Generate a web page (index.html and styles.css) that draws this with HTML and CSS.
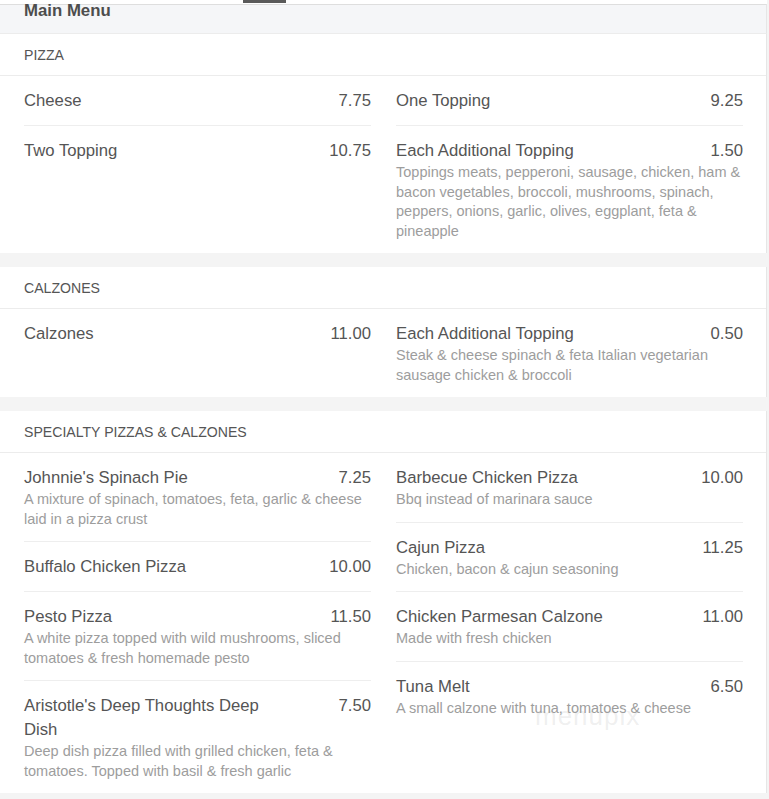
FILE: index.html
```html
<!DOCTYPE html>
<html>
<head>
<meta charset="utf-8">
<link rel="stylesheet" href="styles.css">
</head>
<body>
<div class="tabs"><span class="tab-active"></span></div>
<div class="header">Main Menu</div>

<section class="card">
  <h2 class="section-title">Pizza</h2>
  <div class="cols">
    <div class="col">
      <div class="item"><div class="row"><span class="name">Cheese</span><span class="price">7.75</span></div></div>
      <div class="item"><div class="row"><span class="name">Two Topping</span><span class="price">10.75</span></div></div>
    </div>
    <div class="col">
      <div class="item"><div class="row"><span class="name">One Topping</span><span class="price">9.25</span></div></div>
      <div class="item"><div class="row"><span class="name">Each Additional Topping</span><span class="price">1.50</span></div>
        <p class="desc">Toppings meats, pepperoni, sausage, chicken, ham &amp; bacon vegetables, broccoli, mushrooms, spinach, peppers, onions, garlic, olives, eggplant, feta &amp; pineapple</p></div>
    </div>
  </div>
</section>

<section class="card">
  <h2 class="section-title">Calzones</h2>
  <div class="cols">
    <div class="col">
      <div class="item"><div class="row"><span class="name">Calzones</span><span class="price">11.00</span></div></div>
    </div>
    <div class="col">
      <div class="item"><div class="row"><span class="name">Each Additional Topping</span><span class="price">0.50</span></div>
        <p class="desc">Steak &amp; cheese spinach &amp; feta Italian vegetarian sausage chicken &amp; broccoli</p></div>
    </div>
  </div>
</section>

<section class="card last">
  <h2 class="section-title">Specialty Pizzas &amp; Calzones</h2>
  <div class="cols">
    <div class="col">
      <div class="item"><div class="row"><span class="name">Johnnie's Spinach Pie</span><span class="price">7.25</span></div>
        <p class="desc">A mixture of spinach, tomatoes, feta, garlic &amp; cheese laid in a pizza crust</p></div>
      <div class="item"><div class="row"><span class="name">Buffalo Chicken Pizza</span><span class="price">10.00</span></div></div>
      <div class="item"><div class="row"><span class="name">Pesto Pizza</span><span class="price">11.50</span></div>
        <p class="desc">A white pizza topped with wild mushrooms, sliced tomatoes &amp; fresh homemade pesto</p></div>
      <div class="item"><div class="row"><span class="name">Aristotle's Deep Thoughts Deep Dish</span><span class="price">7.50</span></div>
        <p class="desc">Deep dish pizza filled with grilled chicken, feta &amp; tomatoes. Topped with basil &amp; fresh garlic</p></div>
    </div>
    <div class="col">
      <div class="item"><div class="row"><span class="name">Barbecue Chicken Pizza</span><span class="price">10.00</span></div>
        <p class="desc">Bbq instead of marinara sauce</p></div>
      <div class="item"><div class="row"><span class="name">Cajun Pizza</span><span class="price">11.25</span></div>
        <p class="desc">Chicken, bacon &amp; cajun seasoning</p></div>
      <div class="item"><div class="row"><span class="name">Chicken Parmesan Calzone</span><span class="price">11.00</span></div>
        <p class="desc">Made with fresh chicken</p></div>
      <div class="item"><div class="row"><span class="name">Tuna Melt</span><span class="price">6.50</span></div>
        <p class="desc">A small calzone with tuna, tomatoes &amp; cheese</p></div>
    </div>
  </div>
  <span class="watermark">menupix</span>
</section>
</body>
</html>
```

FILE: styles.css
```css
* { box-sizing: border-box; }
html, body { margin: 0; padding: 0; }
body {
  background: #f4f4f4;
  font-family: "Liberation Sans", Arial, sans-serif;
  color: #555;
  width: 769px;
}
.tabs {
  height: 4px;
  background: #fff;
  width: 767px;
  display: flex;
}
.tab-active {
  display: block;
  margin-left: 243px;
  width: 43px;
  height: 3px;
  background: #5a5a5a;
}
.header {
  width: 767px;
  height: 30px;
  background: #f5f6f8;
  border-top: 1px solid #dedede;
  border-bottom: 1px solid #ececec;
  border-right: 1px solid #e6e6e6;
  padding-left: 24px;
  font-size: 16.8px;
  font-weight: bold;
  line-height: 12px;
  color: #4d4d4d;
}
.card {
  position: relative;
  width: 767px;
  background: #fff;
  border-right: 1px solid #e6e6e6;
  margin-bottom: 14px;
}
.card.last { margin-bottom: 0; }
.section-title {
  margin: 0;
  height: 42px;
  padding: 0 24px;
  border-bottom: 1px solid #ececec;
  font-size: 14.1px;
  font-weight: normal;
  text-transform: uppercase;
  line-height: 42px;
  color: #555;
}
.cols {
  display: grid;
  grid-template-columns: 347px 347px;
  column-gap: 25px;
  padding: 0 24px;
  align-items: start;
}
.col { display: flex; flex-direction: column; }
.item {
  padding: 13px 0 12px;
  border-bottom: 1px solid #eeeeee;
}
.item:last-child { border-bottom: none; }
.row {
  display: flex;
  justify-content: space-between;
  align-items: flex-start;
  font-size: 16.7px;
  line-height: 24px;
  color: #555;
}
.name { width: 255px; }
.price { text-align: right; }
.desc {
  margin: 0;
  font-size: 14.5px;
  line-height: 19.5px;
  color: #9d9d9d;
}
.watermark {
  position: absolute;
  left: 535px;
  top: 290px;
  font-size: 26px;
  font-weight: 300;
  letter-spacing: 1px;
  color: rgba(160, 160, 160, 0.18);
  pointer-events: none;
}
```
